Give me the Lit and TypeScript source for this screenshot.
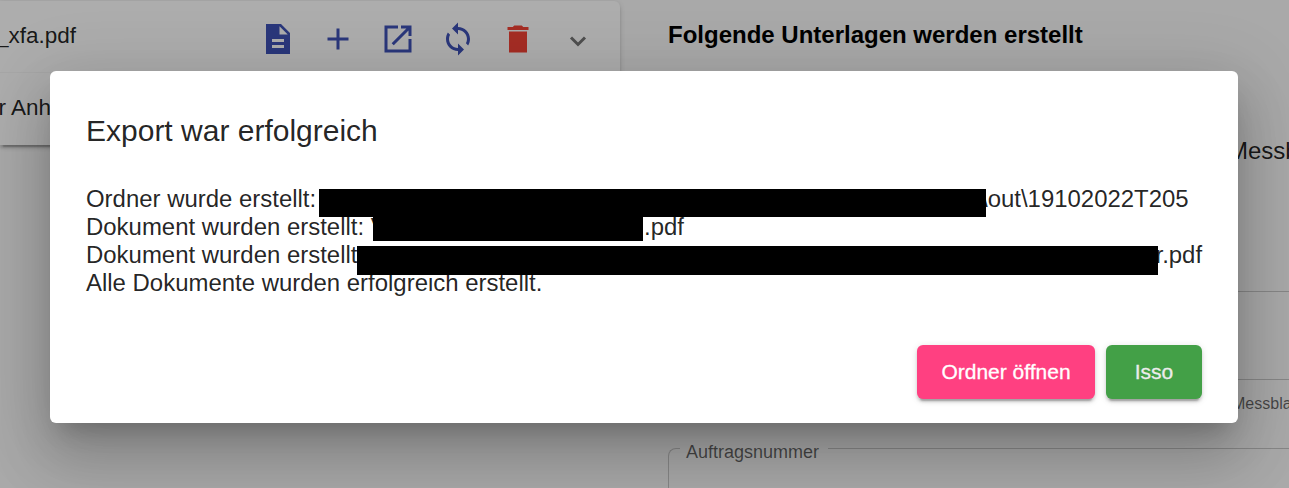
import { LitElement, html, css, svg } from "lit";
import { customElement } from "lit/decorators.js";

const ICONS = [
  { kind: "primary", d: "M14 2H4v20h16V8l-6-6zm2 16H8v-2h8v2zm0-4H8v-2h8v2zm-3-5V3.5L18.500 9H13z" },
  { kind: "primary", d: "M19 13h-6v6h-2v-6H5v-2h6V5h2v6h6v2z" },
  { kind: "primary", d: "M19 19H5V5h7V3H3v18h18v-9h-2v7zM14 3v2h3.590l-9.830 9.830 1.410 1.410L19 6.410V10h2V3h-7z" },
  { kind: "primary", d: "M12 4V1L8 5l4 4V6c3.310 0 6 2.690 6 6 0 1.010-.25 1.970-.7 2.800l1.460 1.460C19.540 15.030 20 13.570 20 12c0-4.420-3.580-8-8-8zm0 14c-3.310 0-6-2.690-6-6 0-1.010.25-1.970.7-2.800L5.240 7.740C4.460 8.970 4 10.430 4 12c0 4.420 3.580 8 8 8v3l4-4-4-4v3z" },
  { kind: "warn", d: "M6 21h12V7H6v14zM19 4h-3.500l-1-1h-5l-1 1H5v2h14V4z" },
];

@customElement("file-list")
class FileList extends LitElement {
  static styles = css`
    :host { display: block; padding-top: 1px; }
    .panel {
      background: #fff; border-radius: 0 6px 6px 0;
      box-shadow: 0 4.500px 1.500px -3px rgba(0,0,0,.2), 0 3px 3px rgba(0,0,0,.14), 0 1.500px 7.500px rgba(0,0,0,.12);
    }
    .row { display: flex; align-items: center; height: 71px; box-sizing: border-box; color: rgba(0,0,0,.87); font-size: 22.500px; white-space: nowrap; }
    .row + .row { border-top: 1px solid #f6f6f6; height: 73px; padding-bottom: 2px; }
    .name { flex: none; width: 260px; text-indent: -4px; padding-bottom: 2px; }
    .row + .row .name { text-indent: -1.500px; padding-bottom: 0; }
    .actions { display: flex; gap: 24px; padding-top: 5px; }
    svg { display: block; width: 36px; height: 36px; }
    .primary { fill: #3f51b5; }
    .warn { fill: #f44336; }
    .chevron { width: 36px; stroke: #757575; stroke-width: 3; fill: none; }
  `;
  render() {
    return html`<div class="panel">
      <div class="row">
        <span class="name">_xfa.pdf</span>
        <div class="actions">
          ${ICONS.map((i) => html`<svg class=${i.kind} viewBox="0 0 24 24">${svg`<path d=${i.d}></path>`}</svg>`)}
          <svg class="chevron" viewBox="0 0 36 36"><path d="M11 16.500l7 7 7-7"></path></svg>
        </div>
      </div>
      <div class="row"><span class="name">r Anhang</span></div>
    </div>`;
  }
}

@customElement("order-form")
class OrderForm extends LitElement {
  static styles = css`
    :host { display: flex; flex-direction: column; }
    h3 { margin: 0; padding-top: 21px; font-size: 24px; line-height: 28px; font-weight: 700; color: #000; white-space: nowrap; }
    .entry { margin-top: 88px; height: 28px; line-height: 28px; padding-left: 560px; font-size: 24px; color: rgba(0,0,0,.87); white-space: nowrap; overflow: hidden; }
    .box { margin-top: 126px; height: 87px; border: 1px solid #c8c8c8; border-width: 1px 0 1px 1px; }
    .hint { height: 18px; line-height: 18px; margin-top: 15px; padding-left: 564px; font-size: 16px; color: rgba(0,0,0,.6); white-space: nowrap; overflow: hidden; }
    fieldset { margin: 28px 0 0; padding: 0 0 0 11px; height: 80px; border: 1px solid #c8c8c8; border-right: 0; border-radius: 8px 0 0 0; }
    legend { padding: 0 9px 0 6px; height: 14px; font-size: 18px; line-height: 22px; color: rgba(0,0,0,.6); }
  `;
  render() {
    return html`<h3>Folgende Unterlagen werden erstellt</h3>
      <div class="entry">Messblatt</div>
      <div class="box"></div>
      <div class="hint">Messblatt</div>
      <fieldset><legend>Auftragsnummer</legend></fieldset>`;
  }
}

@customElement("export-dialog")
class ExportDialog extends LitElement {
  static styles = css`
    :host {
      display: flex; flex-direction: column; box-sizing: border-box; width: 1188px; height: 352px; padding: 36px; padding-bottom: 24px;
      background: #fff; border-radius: 6px; color: rgba(0,0,0,.87);
      box-shadow: 0 16.500px 22.500px -10.500px rgba(0,0,0,.2), 0 36px 57px 4.500px rgba(0,0,0,.14), 0 13.500px 69px 12px rgba(0,0,0,.12);
    }
    h2 { margin: 0 0 30px; font-size: 30px; line-height: 48px; font-weight: 400; }
    .line { display: flex; align-items: flex-start; height: 28px; line-height: 28px; font-size: 23.950px; white-space: pre; }
    .label { flex: none; }
    .bar { flex: none; background: #000; position: relative; z-index: 1; }
    .folder .label { width: 233px; }
    .folder .bar { width: 667px; height: 28px; margin-top: 4px; }
    .folder .tail { margin-left: -5px; }
    .first .label { width: 287px; }
    .first .bar { width: 270px; height: 28px; }
    .first .tail { margin-left: 1px; }
    .second .label { width: 271px; }
    .second .bar { width: 801px; height: 29px; margin-top: 5px; }
    .second .tail { margin-left: -2.500px; }
    .buttons { display: flex; justify-content: flex-end; gap: 11px; margin-top: auto; }
    button {
      border: 0; border-radius: 6px; height: 54px; padding: 0; color: #fff; font: 500 21px "Liberation Sans", Arial, sans-serif;
      -webkit-text-stroke: .3px currentColor;
      box-shadow: 0 4.500px 1.500px -3px rgba(0,0,0,.2), 0 3px 3px rgba(0,0,0,.14), 0 1.500px 7.500px rgba(0,0,0,.12);
    }
    .open { background: #ff4081; width: 178px; }
    .ok { background: #43a047; width: 96px; color: #ececec; }
  `;
  render() {
    return html`<h2>Export war erfolgreich</h2>
      <div class="line folder"><span class="label">Ordner wurde erstellt:</span><span class="bar"></span><span class="tail">\\out\\19102022T205</span></div>
      <div class="line first"><span class="label">Dokument wurden erstellt: V</span><span class="bar"></span><span class="tail">.pdf</span></div>
      <div class="line second"><span class="label">Dokument wurden erstellt:</span><span class="bar"></span><span class="tail">r.pdf</span></div>
      <div class="line"><span>Alle Dokumente wurden erfolgreich erstellt.</span></div>
      <div class="buttons"><button class="open">Ordner öffnen</button><button class="ok">Isso</button></div>`;
  }
}

@customElement("app-root")
class AppRoot extends LitElement {
  static styles = css`
    :host { display: block; position: relative; width: 1289px; height: 488px; overflow: hidden; background: #fafafa; font-family: "Liberation Sans", Arial, sans-serif; }
    .page { display: grid; grid-template-columns: 620px 621px; column-gap: 48px; height: 488px; }
    .overlay { position: absolute; inset: 0; display: flex; align-items: flex-start; padding: 71px 0 0 50px; background: rgba(0,0,0,.32); }
  `;
  render() {
    return html`<div class="page"><file-list></file-list><order-form></order-form></div>
      <div class="overlay"><export-dialog></export-dialog></div>`;
  }
}
